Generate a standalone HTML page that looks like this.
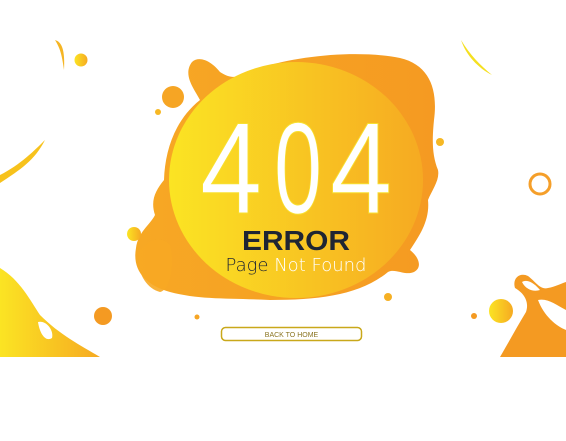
<!DOCTYPE html>
<html><head><style>
html,body{margin:0;padding:0;background:#fff;width:566px;height:441px;overflow:hidden}
svg{position:absolute;left:0;top:0}
</style></head><body>
<svg width="566" height="441" viewBox="0 0 566 441">
<defs>
<linearGradient id="y" x1="0" x2="1" y1="0" y2="0"><stop offset="0" stop-color="#fbe423"/><stop offset="1" stop-color="#f6aa22"/></linearGradient>
<linearGradient id="o" x1="0" x2="1"><stop offset="0" stop-color="#f7a824"/><stop offset="1" stop-color="#f59a22"/></linearGradient>
</defs>
<path fill="url(#o)" d="M192 62 C200 55 212 62 220 72 C232 80 240 78 260 68 C300 55 360 50 400 58 C430 65 438 90 434 120 C432 140 432 155 438 170 C440 180 432 190 428 200 C430 220 420 235 410 250 C420 258 422 268 414 272 C405 276 395 268 388 272 C360 295 320 300 270 300 C230 298 200 300 170 292 C145 285 132 270 136 248 C138 232 150 225 155 215 C150 200 156 190 164 180 C165 150 175 120 200 100 C195 90 182 75 192 62Z"/>
<ellipse cx="296" cy="180" rx="127" ry="118" fill="url(#y)"/>
<path fill="#f7a824" d="M140 250 C150 240 160 235 170 245 C175 265 170 290 160 292 C145 288 135 270 140 250Z" opacity="0.9"/>
<circle cx="173" cy="97" r="11" fill="#f6a524"/>
<circle cx="158" cy="112" r="3" fill="#f7b824"/>
<circle cx="440" cy="142" r="4" fill="#f6b824"/>
<circle cx="134" cy="234" r="7" fill="url(#y)"/>
<circle cx="388" cy="297" r="4" fill="#f6b024"/>
<circle cx="197" cy="317" r="2.5" fill="#f6a524"/>
<circle cx="103" cy="316" r="9" fill="#f49a22"/>
<circle cx="81" cy="60" r="6.5" fill="url(#y)"/>
<circle cx="540" cy="184" r="10" fill="none" stroke="#f59f2a" stroke-width="3"/>
<circle cx="501" cy="311" r="12" fill="url(#y)"/>
<circle cx="474" cy="316" r="3" fill="#f49a22"/>
<path fill="#f7c21c" d="M0 175 C20 165 35 150 45 140 C35 160 20 170 0 183Z"/>
<path fill="#f5b524" d="M55 40 C62 42 65 50 64 70 C62 55 60 48 55 40Z"/>
<path fill="url(#y)" d="M0 268 C20 280 30 300 40 315 C60 335 80 345 100 357 L0 357Z"/>
<path fill="#fff" d="M38 322 C46 320 54 330 52 338 C46 342 40 335 38 322Z"/>
<path fill="#f5e020" d="M461 40 C470 55 480 65 492 75 C478 68 466 55 461 40Z"/>
<path fill="#f49a22" d="M500 357 C510 340 518 325 526 312 C530 300 522 292 515 288 C512 278 520 272 528 276 C536 282 540 290 548 288 C555 287 562 283 566 282 L566 357Z"/>
<path fill="#fff" d="M522 282 C528 278 536 285 540 290 C534 292 526 290 522 282Z"/>
<path fill="#fff" d="M538 300 C548 298 556 305 566 310 L566 330 C556 326 544 316 538 300Z"/>
<g font-family="Liberation Sans, sans-serif" font-size="130" fill="#fff" stroke="#f8e030" stroke-width="1">
<text x="200" y="213" textLength="62" lengthAdjust="spacingAndGlyphs">4</text>
<text x="274" y="213" textLength="48" lengthAdjust="spacingAndGlyphs">0</text>
<text x="330" y="213" textLength="62" lengthAdjust="spacingAndGlyphs">4</text>
</g>
<text x="296" y="250" text-anchor="middle" textLength="108" lengthAdjust="spacingAndGlyphs" font-family="Liberation Sans, sans-serif" font-weight="bold" font-size="28" fill="#1f2533">ERROR</text>
<text x="296" y="271" text-anchor="middle" font-family="DejaVu Sans, Liberation Sans, sans-serif" font-weight="200" font-size="18" fill="#fff"><tspan fill="#1f2533">Page </tspan>Not Found</text>
<rect x="221.5" y="327.5" width="140" height="13" rx="4" fill="#fff" stroke="#c9a81a" stroke-width="1.5"/>
<text x="291.5" y="337" text-anchor="middle" font-family="Liberation Sans, sans-serif" font-size="7" fill="#8a7420">BACK TO HOME</text>
</svg>
</body></html>
